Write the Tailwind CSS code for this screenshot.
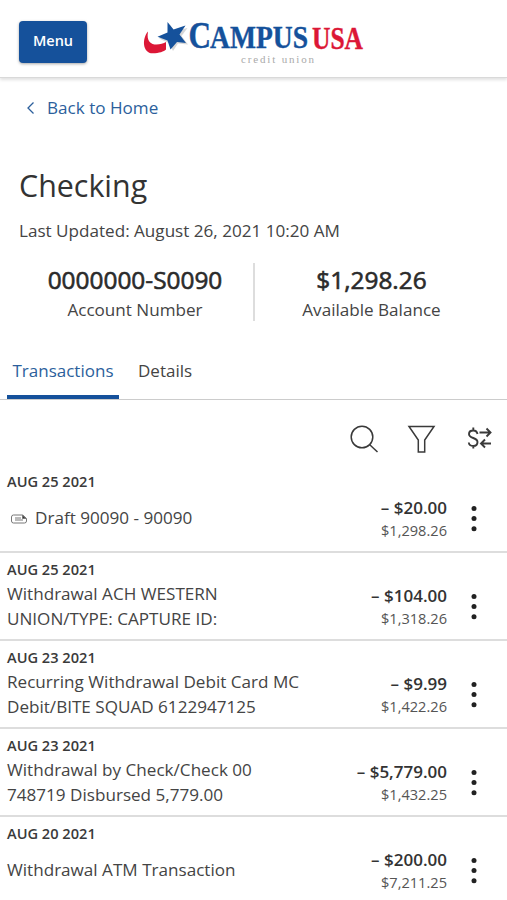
<!DOCTYPE html>
<html lang="en">
<head>
<meta charset="utf-8">
<title>Checking</title>
<script src="https://cdn.jsdelivr.net/npm/@tailwindcss/browser@4"></script>
</head>
<body class="bg-white text-[#444] font-['Open_Sans','Noto_Sans',sans-serif] w-[507px] h-[900px] overflow-hidden">
<header class="h-[78px] flex pl-[19px] border-b border-[#d9d9d9] shadow-[0_2px_3px_rgba(0,0,0,0.12)]">
  <button class="mt-[21px] w-[68px] h-[42px] rounded-[4px] bg-[#15519b] text-white text-[14.500px] font-semibold leading-[20px] pb-[3px] shadow-[0_1px_3px_rgba(0,0,0,0.35)]">Menu</button>
  <svg class="ml-[53px] mt-[14px]" width="230" height="56" viewBox="140 14 230 56" role="img" aria-label="Campus USA credit union">
    <path d="M148 31.500C142 38 142 53.500 153 53.300C159 53.300 164 51.500 166 49.500V42C160 45.500 145 48 148 31.500Z" fill="#dc1736"/>
    <path d="M169.500 24L174.500 31L187.500 28L181.500 36L188 44.500L178 43.500L173 51L169 43L159 38.500L171 34Z" fill="#777" opacity=".3"/>
    <path d="M167.500 22L173.500 29.500L185.500 25.500L179.500 34.500L186 43L177 42L170.500 49.500L167.500 40.500L157.500 36.700L167.500 32.500Z" fill="#15519b"/>
    <g font-family="'Liberation Serif',serif" font-weight="700" stroke-width=".4">
      <text x="188.500" y="48" font-size="37" fill="#15519b" stroke="#15519b" textLength="22.500" lengthAdjust="spacingAndGlyphs">C</text>
      <text x="210" y="48" font-size="31" fill="#15519b" stroke="#15519b" textLength="98" lengthAdjust="spacingAndGlyphs">AMPUS</text>
      <text x="312" y="48.500" font-size="31" fill="#dc1736" stroke="#dc1736" textLength="51" lengthAdjust="spacingAndGlyphs">USA</text>
    </g>
    <text x="241" y="63" font-family="'Liberation Serif',serif" font-size="11" fill="#aaa" textLength="73">credit union</text>
  </svg>
</header>
<a class="flex items-center h-[24px] mt-[18px] pl-[26px] gap-[12px] text-[#2c5f9c] text-[17.100px]">
  <svg width="9" height="14" viewBox="0 0 9 14" fill="none" stroke="currentColor" stroke-width="1.3"><path d="M7.500 1.500L2 7L7.500 12.500"/></svg>
  <span>Back to Home</span>
</a>
<h1 class="mt-[46px] pl-[19px] text-[30.400px] leading-[40px] text-[#333]">Checking</h1>
<p class="mt-[13px] pl-[19px] text-[17.100px] leading-[24px]">Last Updated: August 26, 2021 10:20 AM</p>
<section class="flex mt-[20px] px-[17px] text-center">
  <div class="w-[238px] h-[58px] border-r-2 border-[#ddd]">
    <div class="text-[24.400px] leading-[33px] text-[#2b2b2b] [-webkit-text-stroke:0.600px_#2b2b2b]">0000000-S0090</div>
    <div class="text-[17.100px] leading-[27px]">Account Number</div>
  </div>
  <div class="w-[233px] h-[58px]">
    <div class="text-[24.400px] leading-[33px] text-[#2b2b2b] [-webkit-text-stroke:0.600px_#2b2b2b]">$1,298.26</div>
    <div class="text-[17.100px] leading-[27px]">Available Balance</div>
  </div>
</section>
<nav class="flex mt-[35px] h-[44px] pl-[7px] border-b border-[#ccc] text-[17px] leading-[30px]">
  <span class="w-[112px] h-[43px] text-center border-b-4 border-[#15519b] text-[#2c5f9c]">Transactions</span>
  <span class="ml-[19px]">Details</span>
</nav>
<div class="flex h-[65px] pt-[24px] pl-[349px]">
  <svg width="30" height="32" viewBox="349 424 30 32" fill="none" stroke="#3a3a3a" stroke-width="1.500"><circle cx="362" cy="437" r="10.800"/><path d="M369.500 444.500L377.500 452"/></svg>
  <svg class="ml-[28px]" width="30" height="32" viewBox="407 424 30 32" fill="none" stroke="#3a3a3a" stroke-width="1.500"><path d="M409 426.500H434L424.700 440V452H418.300V440Z"/></svg>
  <svg class="ml-[30px]" width="28" height="32" viewBox="467 424 28 32" fill="none" stroke="#3a3a3a" stroke-width="1.900"><path d="M477.500 434C477 431.500 475.500 430.500 473.300 430.500C470.500 430.500 469 432 469 434C469 439 477.500 437 477.500 442C477.500 444.500 476 446 473.300 446C470.500 446 469 444.500 468.800 442.500M473.300 427.500V430.500M473.300 446V448.500M479.500 432.500H490.500M486.500 428.500L490.500 432.500L486.500 436.500M491 443.500H481M485 439.500L481 443.500L485 447.500"/></svg>
</div>
<main id="rows"></main>
<template id="row">
  <article class="flex h-[88px] border-b-2 border-[#ddd] pl-[7px]">
    <div class="w-[320px] pt-[8px]">
      <div class="text-[14.600px] leading-[17px] font-semibold text-[#3a3a3a]" data-date></div>
      <div class="flex items-center h-[57px] text-[17.100px] leading-[24.500px]"><svg class="ml-[4px] mr-[8px]" width="16" height="10" viewBox="0 0 16 10" fill="none" stroke="#777"><path d="M11.500 1H2.500Q.5 1 .5 3V7Q.5 9 2.500 9H13.500Q15.500 9 15.500 7V4.500ZM4 4H10M4 6H12"/><path d="M11.500 1L15 4.500H11.500Z" fill="#333"/></svg><span class="whitespace-pre" data-desc></span></div>
    </div>
    <div class="w-[120px] pt-[31px] text-right">
      <div class="text-[17px] leading-[24px] font-semibold text-[#333]" data-amt></div>
      <div class="text-[14.600px] leading-[21px] text-[#555]" data-bal></div>
    </div>
    <svg class="ml-[23px] mt-[39px]" width="8" height="30" viewBox="0 0 8 30" fill="#222"><circle cx="4" cy="4.500" r="2.500"/><circle cx="4" cy="14.600" r="2.500"/><circle cx="4" cy="24.700" r="2.500"/></svg>
  </article>
</template>
<script>
const data = [
  ["AUG 25 2021", "Draft 90090 - 90090", "– $20.00", "$1,298.26"],
  ["AUG 25 2021", "Withdrawal ACH WESTERN\nUNION/TYPE: CAPTURE ID:", "– $104.00", "$1,318.26"],
  ["AUG 23 2021", "Recurring Withdrawal Debit Card MC\nDebit/BITE SQUAD 6122947125", "– $9.99", "$1,422.26"],
  ["AUG 23 2021", "Withdrawal by Check/Check 00\n748719 Disbursed 5,779.00", "– $5,779.00", "$1,432.25"],
  ["AUG 20 2021", "Withdrawal ATM Transaction", "– $200.00", "$7,211.25"]
];
data.forEach((d, i) => {
  const n = document.getElementById("row").content.cloneNode(true);
  ["date", "desc", "amt", "bal"].forEach((k, j) => n.querySelector(`[data-${k}]`).textContent = d[j]);
  if (i) n.querySelector("svg").remove();
  document.getElementById("rows").append(n);
});
</script>
</body>
</html>
